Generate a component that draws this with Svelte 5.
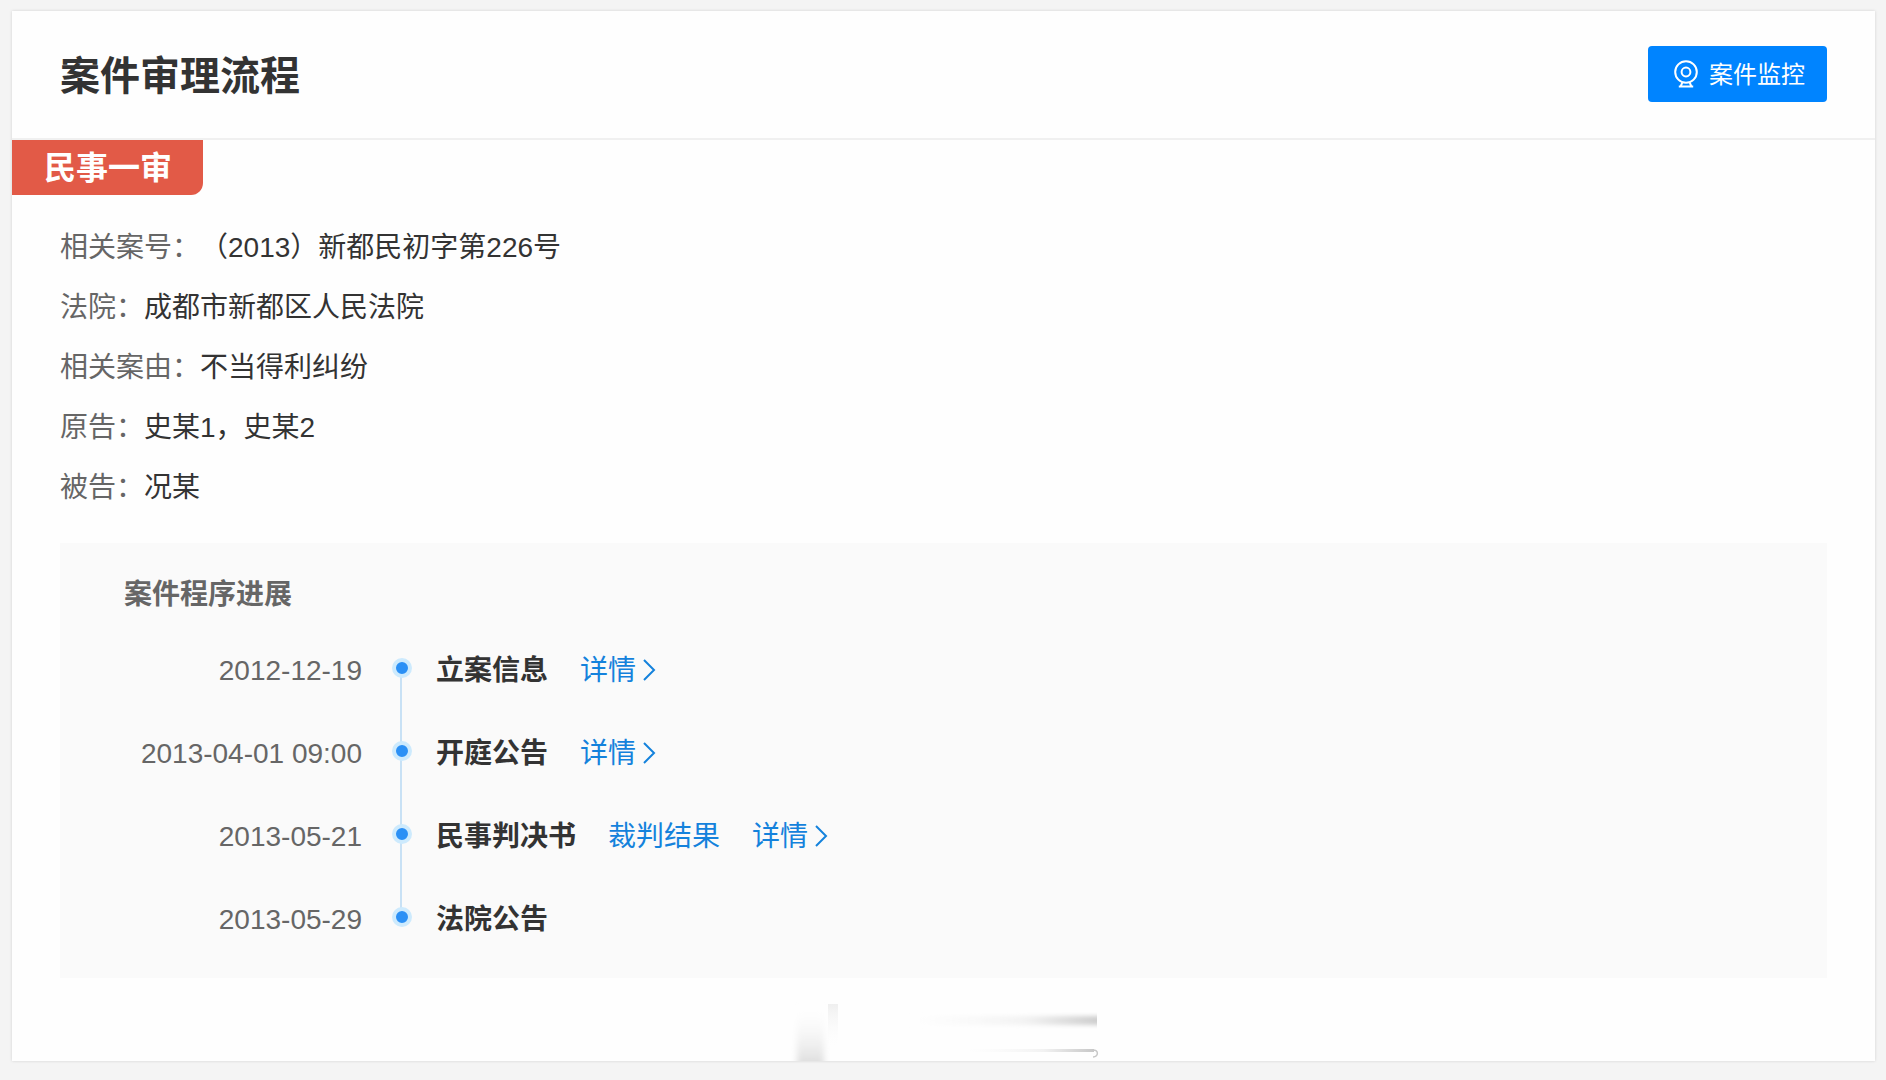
<script lang="ts">
  type Step = { time: string; title: string; result?: string; detail: boolean };

  const info = [
    { label: '相关案号', value: '（2013）新都民初字第226号' },
    { label: '法院', value: '成都市新都区人民法院' },
    { label: '相关案由', value: '不当得利纠纷' },
    { label: '原告', value: '史某1，史某2' },
    { label: '被告', value: '况某' }
  ];

  const steps: Step[] = [
    { time: '2012-12-19', title: '立案信息', detail: true },
    { time: '2013-04-01 09:00', title: '开庭公告', detail: true },
    { time: '2013-05-21', title: '民事判决书', result: '裁判结果', detail: true },
    { time: '2013-05-29', title: '法院公告', detail: false }
  ];
</script>

<main class="card">
  <header class="card-header">
    <h1>案件审理流程</h1>
    <button class="monitor-btn" type="button">
      <svg class="camera" viewBox="0 -2 30 30" aria-hidden="true">
        <circle cx="15" cy="13" r="10.8" />
        <circle cx="15" cy="13" r="4.4" />
        <path d="M11.5 23.2L9.8 27M18.5 23.2L20.2 27M7.8 27.4H22.2" />
      </svg>
      案件监控
    </button>
  </header>

  <div class="tag">民事一审</div>

  <dl class="info">
    {#each info as item}
      <div class="info-row">
        <dt>{item.label}：</dt>
        <dd>{item.value}</dd>
      </div>
    {/each}
  </dl>

  <section class="progress">
    <h2>案件程序进展</h2>
    <ol class="timeline">
      {#each steps as step}
        <li class="step">
          <time>{step.time}</time>
          <span class="rail"><i class="dot"></i></span>
          <div class="step-body">
            <strong>{step.title}</strong>
            {#if step.result}
              <a href="#result">{step.result}</a>
            {/if}
            {#if step.detail}
              <a href="#detail">
                详情
                <svg class="chevron" viewBox="0 0 14 24" aria-hidden="true">
                  <path d="M2 1L12 11L2 21" />
                </svg>
              </a>
            {/if}
          </div>
        </li>
      {/each}
    </ol>
  </section>

  <footer class="watermark">
    <svg viewBox="0 0 312 83" aria-hidden="true">
      <defs>
        <linearGradient id="fade-down" x1="0" y1="0" x2="0" y2="1">
          <stop offset="0" stop-color="#fff" stop-opacity="0" />
          <stop offset="1" stop-color="#d6d6d6" />
        </linearGradient>
        <linearGradient id="fade-up" x1="0" y1="0" x2="0" y2="1">
          <stop offset="0" stop-color="#efefef" />
          <stop offset="1" stop-color="#fff" stop-opacity="0" />
        </linearGradient>
        <linearGradient id="fade-right" x1="0" y1="0" x2="1" y2="0">
          <stop offset="0" stop-color="#f8f8f8" stop-opacity="0" />
          <stop offset="0.6" stop-color="#f2f2f2" />
          <stop offset="1" stop-color="#c8c8c8" />
        </linearGradient>
        <filter id="soft" x="-20%" y="-40%" width="140%" height="180%">
          <feGaussianBlur stdDeviation="3 2" />
        </filter>
        <clipPath id="bar-clip">
          <rect x="50" y="20" width="259" height="50" />
        </clipPath>
      </defs>
      <rect x="9" y="26" width="27" height="66" fill="url(#fade-down)" filter="url(#soft)" />
      <rect x="40" y="26" width="10" height="46" fill="url(#fade-up)" />
      <g clip-path="url(#bar-clip)">
        <rect x="120" y="38" width="200" height="9" fill="url(#fade-right)" filter="url(#soft)" />
      </g>
      <rect x="180" y="71" width="126" height="3" fill="url(#fade-right)" />
      <path d="M304 72C311 71 311 79 305 79" fill="none" stroke="#c8c8c8" stroke-width="1.5" />
    </svg>
  </footer>
</main>

<style>
  :global(body) {
    background: #f4f4f4;
  }

  .card {
    margin: 11px 11px 18px 12px;
    background: #fefefe;
    box-shadow: 0 0 3px rgba(0, 0, 0, 0.14);
    color: #333;
    font-family: "Liberation Sans", "Noto Sans CJK SC", sans-serif;
    font-size: 28px;
  }

  h1,
  h2,
  dl,
  dd,
  ol {
    margin: 0;
    padding: 0;
  }

  h1,
  h2,
  strong,
  .tag {
    font-weight: 600;
  }

  .card-header {
    display: flex;
    align-items: flex-start;
    justify-content: space-between;
    height: 57px;
    padding: 35px 48px;
    border-bottom: 2px solid #f0f0f0;
  }

  h1 {
    font-size: 40px;
    line-height: 60px;
  }

  .monitor-btn {
    display: flex;
    align-items: center;
    gap: 8px;
    height: 56px;
    padding: 0 22px 4px 23px;
    border: none;
    border-radius: 4px;
    background: #0084ff;
    color: #fff;
    font-family: inherit;
    font-size: 24px;
    cursor: pointer;
  }

  .camera {
    width: 30px;
    height: 30px;
    overflow: visible;
    fill: none;
    stroke: #fff;
    stroke-width: 2;
  }

  .tag {
    width: fit-content;
    padding: 2px 31px 0 32px;
    border-radius: 0 0 12px 0;
    background: #e25a47;
    color: #fff;
    font-size: 32px;
    line-height: 53px;
  }

  .info {
    padding: 23px 48px 25px;
  }

  .info-row {
    display: flex;
    line-height: 60px;
  }

  dt {
    color: #666;
  }

  .progress {
    margin: 0 48px;
    padding: 32px 64px 17px;
    background: #fafafa;
  }

  h2 {
    color: #666;
    font-size: 28px;
    line-height: 40px;
  }

  .timeline {
    padding-top: 14px;
    list-style: none;
  }

  .step {
    display: grid;
    grid-template-columns: 238px 26px 1fr;
    column-gap: 24px;
    line-height: 83px;
  }

  time {
    color: #666;
    text-align: right;
  }

  .rail {
    position: relative;
    display: flex;
    align-items: center;
    justify-content: flex-end;
    padding-bottom: 6px;
  }

  /* connector down to the next dot */
  .step:not(:last-child) .rail::after {
    content: "";
    position: absolute;
    top: 39px;
    right: 10px;
    width: 2px;
    height: 100%;
    background: #c8e1f5;
  }

  .dot {
    z-index: 1;
    width: 12px;
    height: 12px;
    border: 4px solid #cdeafd;
    border-radius: 50%;
    background: #2b90f5;
  }

  .step-body {
    display: flex;
    gap: 32px;
  }

  a {
    display: flex;
    align-items: center;
    gap: 6px;
    color: #1482dc;
    text-decoration: none;
  }

  .chevron {
    width: 14px;
    height: 24px;
    fill: none;
    stroke: currentColor;
    stroke-width: 2;
  }

  .watermark {
    display: flex;
    justify-content: center;
    height: 83px;
  }

  .watermark svg {
    width: 312px;
    height: 83px;
  }
</style>
